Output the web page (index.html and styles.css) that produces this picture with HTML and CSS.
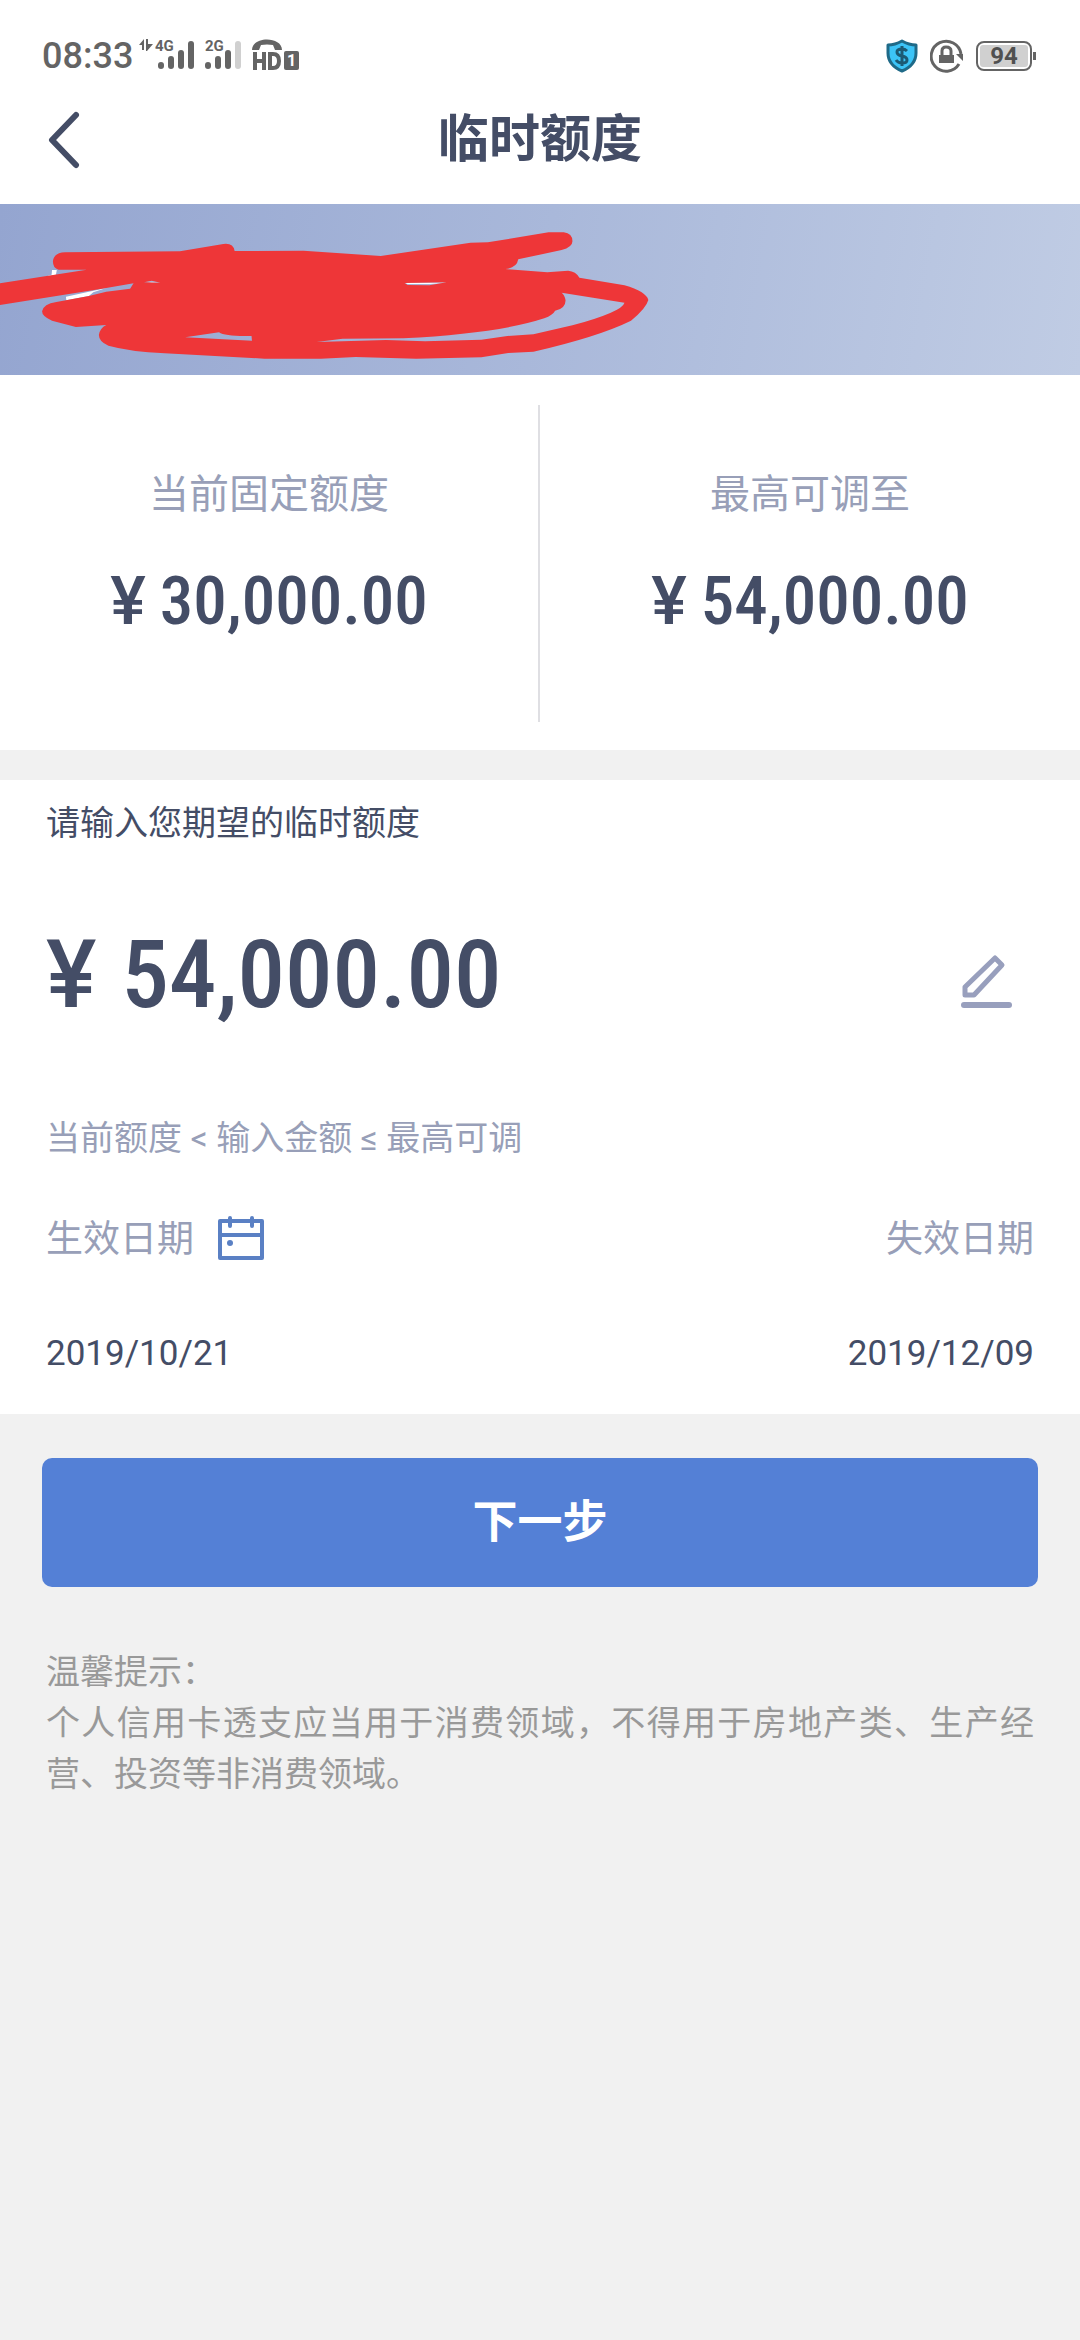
FILE: index.html
```html
<!DOCTYPE html>
<html lang="zh-CN">
<head>
<meta charset="utf-8">
<meta name="viewport" content="width=device-width, initial-scale=1">
<title>临时额度</title>
<link rel="stylesheet" href="styles.css">
</head>
<body>
<div class="status-bar">
  <div class="status-group">
    <span class="clock">08:33</span>
    <svg width="60" height="42" viewBox="0 -4 60 42" aria-hidden="true">
      <path fill="#646464" d="M0 6 L5 0 V11 H3 V6Z M7 0 H9 V5 H14 L8 12 H7Z"/>
      <text class="signal-text" x="16" y="12">4G</text>
      <g fill="#646464"><rect x="19" y="23" width="6" height="7" rx="3"/><rect x="29" y="17" width="6" height="13" rx="3"/><rect x="39" y="11" width="6" height="19" rx="3"/><rect x="49" y="2" width="6" height="28" rx="3"/></g>
    </svg>
    <svg width="41" height="42" viewBox="0 -4 41 42" aria-hidden="true">
      <text class="signal-text" x="0" y="12">2G</text>
      <g fill="#646464"><rect x="0" y="23" width="6" height="7" rx="3"/><rect x="10" y="17" width="6" height="13" rx="3"/><rect x="20" y="11" width="6" height="19" rx="3"/></g>
      <rect x="30" y="2" width="6" height="28" rx="3" fill="#d0d0d0"/>
    </svg>
    <svg width="48" height="34" viewBox="0 0 48 34" aria-hidden="true">
      <path fill="#646464" d="M0 11 C0 -3 30 -3 30 11 L23 11 L21 6 Q15 5 9 6 L7 11Z"/>
      <path fill="none" stroke="#646464" stroke-width="4" d="M3 13 V31 M12 13 V31 M3 22 H12 M18 15 V29 H21 Q27 29 27 22 Q27 15 21 15 Z"/>
      <rect x="32" y="12" width="15" height="19" rx="2" fill="#646464"/>
      <text class="sim-text" x="35" y="27">1</text>
    </svg>
  </div>
  <div class="status-group status-right">
    <svg width="32" height="34" viewBox="0 0 32 34" aria-hidden="true">
      <path fill="#3cc4f7" stroke="#1f6a88" stroke-width="3" stroke-linejoin="round" d="M16 2 Q23 6 30 6 V14 Q30 26 16 32 Q2 26 2 14 V6 Q9 6 16 2Z"/>
      <path fill="none" stroke="#1c5a74" stroke-width="3" d="M21 12 Q19 10 16 10 Q11 10 11 13 Q11 16 16 17 Q21 18 21 21 Q21 24 16 24 Q12 24 10 21 M16 7 V27"/>
    </svg>
    <svg width="34" height="34" viewBox="0 0 34 34" aria-hidden="true">
      <path fill="none" stroke="#646464" stroke-width="3" d="M29 25 A15 15 0 1 1 31 15"/>
      <path fill="#646464" d="M26 15 H33 V22Z M9 16 H24 V24 H9Z"/>
      <path fill="none" stroke="#646464" stroke-width="3" d="M12 16 V12 Q12 8 16 8 Q21 8 21 12 V16"/>
    </svg>
    <div class="battery"><span class="battery-level">94</span></div>
  </div>
</div>

<header class="title-bar">
  <button class="back" type="button" aria-label="返回">
    <svg width="32" height="58" viewBox="0 0 32 58" aria-hidden="true"><path fill="none" stroke="#444d66" stroke-width="6" stroke-linecap="round" stroke-linejoin="round" d="M28 4 L4 29 L28 54"/></svg>
  </button>
  <h1 class="title">临时额度</h1>
</header>

<div class="banner">
  <svg width="680" height="171" viewBox="0 12 1568 513" preserveAspectRatio="none" aria-hidden="true">
    <path fill="#fff" d="M152 290 L245 264 L215 277 L205 288 L153 301Z M120 210 H131 L129 224 L104 230 L119 224Z M933 248 H1031 L990 252 L940 252Z M332 245 L370 246 L350 248Z"/>
    <path fill="#ee3638" fill-rule="evenodd" d="M0 250 L200 209 L135 209 Q122 205 122 184 Q124 158 150 157 L415 154 L515 132 Q538 128 541 153 L700 152 L878 168 L1085 128 L1125 127 L1265 97 L1300 97 Q1320 100 1320 124 Q1320 142 1295 150 L1195 178 Q1192 204 1165 207 L1262 217 L1310 212 Q1328 214 1336 233 L1440 256 Q1490 275 1495 300 Q1490 325 1455 362 Q1380 410 1230 455 L1172 459 L1110 472 L960 476 L820 471 L740 476 L610 476 L380 460 Q300 455 250 437 Q228 425 228 405 Q230 385 245 375 L175 381 L120 362 Q97 350 97 334 Q100 312 130 306 L205 288 L245 275 L300 266 L308 250 L235 266 L0 315Z
      M1295 278 L1440 308 Q1435 335 1320 376 L1230 403 L1170 408 L1110 419 L980 424 L890 420 L730 426 L790 416 L930 415 Q1150 400 1255 355 Q1275 345 1280 332 Q1305 325 1304 300 Q1302 285 1295 278Z
      M427 412 L505 397 Q520 410 580 408 L581 422Z M933 249 L1030 247 L990 256 L940 255Z M332 247 L350 242 L370 248Z"/>
  </svg>
</div>

<main>
  <section class="quota">
    <div class="quota-cell">
      <p class="quota-label">当前固定额度</p>
      <p class="quota-value"><span class="yen">¥</span><span>30,000.00</span></p>
    </div>
    <div class="quota-cell">
      <p class="quota-label">最高可调至</p>
      <p class="quota-value"><span class="yen">¥</span><span>54,000.00</span></p>
    </div>
  </section>

  <form>
    <section class="request">
      <label class="prompt" for="amount">请输入您期望的临时额度</label>
      <div class="amount-row">
        <span class="yen">¥</span>
        <input class="amount" id="amount" type="text" inputmode="decimal" value="54,000.00">
        <button class="edit" type="button" aria-label="编辑金额">
          <svg width="52" height="56" viewBox="0 0 52 56" aria-hidden="true">
            <path fill="none" stroke="#989fbd" stroke-width="5" stroke-linejoin="round" d="M34 4 L41 11 L13 41 H4 V33Z"/>
            <path stroke="#989fbd" stroke-width="6" stroke-linecap="round" d="M3 51 H48"/>
          </svg>
        </button>
      </div>
      <p class="hint">当前额度 &lt; 输入金额 ≤ 最高可调</p>
      <div class="date-labels">
        <span>生效日期</span>
        <button type="button" aria-label="选择生效日期">
          <svg width="48" height="48" viewBox="0 0 48 48" aria-hidden="true">
            <path fill="none" stroke="#5a80c4" stroke-width="4" stroke-linejoin="round" d="M3 5 H45 V42 H3Z M3 19 H45"/>
            <path stroke="#5a80c4" stroke-width="4" stroke-linecap="round" d="M13 2 V10 M35 2 V10"/>
            <circle cx="13" cy="27" r="3" fill="#5a80c4"/>
          </svg>
        </button>
        <span class="date-end">失效日期</span>
      </div>
      <div class="date-values">
        <time datetime="2019-10-21">2019/10/21</time>
        <time datetime="2019-12-09">2019/12/09</time>
      </div>
    </section>
    <button class="next" type="button">下一步</button>
  </form>

  <section class="tips">
    <p>温馨提示：</p>
    <p>个人信用卡透支应当用于消费领域，不得用于房地产类、生产经营、投资等非消费领域。</p>
  </section>
</main>
</body>
</html>
```
FILE: styles.css
```css
* { box-sizing: border-box; }

body {
  margin: 0;
  min-height: 100vh;
  background: #f1f1f1;
  color: #444d66;
  font-family: Roboto, "Noto Sans CJK SC", sans-serif;
  font-size: 34px;
}

p, h1 { margin: 0; }

button {
  padding: 0;
  border: 0;
  background: none;
  font: inherit;
  color: inherit;
}

svg { display: block; }

/* system status bar */
.status-bar {
  display: flex;
  justify-content: space-between;
  padding: 35px 46px 7px 42px;
  background: #fff;
  color: #646464;
}

.status-group { display: flex; align-items: center; height: 42px; gap: 6px; }
.status-right { gap: 12px; }
.clock { font-size: 36px; line-height: 42px; font-weight: 500; }
.signal-text { font: 700 15px Roboto, sans-serif; fill: #646464; }
.sim-text { font: 700 16px Roboto, sans-serif; fill: #fff; }

.battery {
  position: relative;
  width: 56px;
  height: 30px;
  padding: 2px;
  margin-right: 2px;
  border: 2px solid #646464;
  border-radius: 8px;
}
.battery::after {
  content: "";
  position: absolute;
  top: 9px;
  right: -6px;
  width: 3px;
  height: 8px;
  background: #646464;
}
.battery-level {
  display: block;
  border-radius: 3px;
  background: #d0d0d0;
  color: #505050;
  font-size: 24px;
  line-height: 22px;
  font-weight: 700;
  text-align: center;
}

/* page title */
.title-bar {
  display: grid;
  grid-template-columns: 80px 1fr 80px;
  align-items: center;
  padding: 0 0 8px;
  background: #fff;
}
.back { padding: 27px 0 27px 48px; }
.title {
  font-size: 51px;
  line-height: 60px;
  font-weight: 700;
  text-align: center;
}

.banner {
  overflow: hidden;
  background: linear-gradient(100deg, #94a5d0, #a9b8da 50%, #c0cce4);
}

/* current and maximum limits */
.quota {
  display: grid;
  grid-template-columns: 1fr 1fr;
  padding: 30px 0 28px;
  background: #fff;
}
.quota-cell { padding: 60px 0 86px; text-align: center; }
.quota-cell:first-child { border-right: 2px solid #dfdfe3; }
.quota-label { color: #989fb8; font-size: 40px; line-height: 60px; }
.quota-value {
  display: flex;
  justify-content: center;
  gap: 14px;
  margin-top: 41px;
  font-family: "Roboto Condensed", Roboto, sans-serif;
  font-size: 67px;
  line-height: 70px;
  font-weight: 500;
}
.yen { font-family: Roboto, sans-serif; }

/* requested limit */
.request {
  margin-top: 30px;
  padding: 23px 46px 40px;
  background: #fff;
}
.prompt { display: block; line-height: 40px; }
.amount-row {
  display: flex;
  gap: 25px;
  margin-top: 77px;
  font-size: 95px;
  line-height: 110px;
  font-weight: 500;
}
.amount {
  flex: 1;
  min-width: 0;
  height: 110px;
  padding: 0;
  border: 0;
  outline: 0;
  background: none;
  color: inherit;
  font: inherit;
  font-family: "Roboto Condensed", Roboto, sans-serif;
}
.edit { align-self: flex-end; padding: 0 21px 20px 0; }
.hint { margin-top: 88px; color: #989fb8; line-height: 40px; }
.date-labels {
  display: flex;
  align-items: center;
  gap: 23px;
  margin-top: 57px;
  color: #989fb8;
  font-size: 37px;
  line-height: 50px;
}
.date-end { margin-left: auto; }
.date-values {
  display: flex;
  justify-content: space-between;
  margin-top: 69px;
  font-size: 35px;
  line-height: 40px;
}

.next {
  display: block;
  width: calc(100% - 84px);
  margin: 44px 42px 0;
  padding: 35px 0 34px;
  border-radius: 10px;
  background: #5480d6;
  color: #fff;
  font-size: 45px;
  line-height: 60px;
  font-weight: 700;
}

.tips {
  padding: 60px 46px;
  color: #999;
  line-height: 51px;
  text-align: justify;
}
```
